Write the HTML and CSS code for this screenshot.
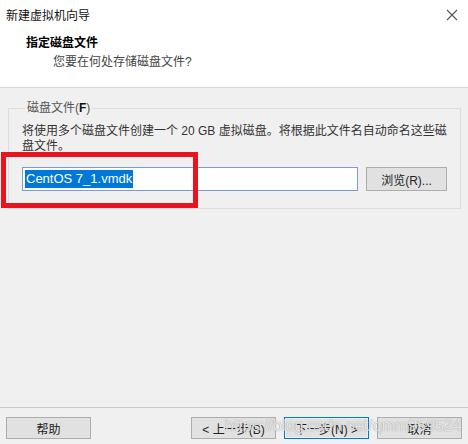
FILE: index.html
```html
<!DOCTYPE html>
<html lang="zh-CN">
<head>
    <meta charset="UTF-8">
    <title>新建虚拟机向导</title>
    <link rel="stylesheet" href="styles.css">
</head>
<body>
    <div class="wizard">
        <div class="top">
            <div class="titlebar">
                <span class="title">新建虚拟机向导</span>
                <span class="close">
                    <svg width="12" height="12" viewBox="0 0 12 12"><path d="M1 1 L11 11 M11 1 L1 11" stroke="#555" stroke-width="1.1"/></svg>
                </span>
            </div>
            <div class="page-head">
                <div class="page-title">指定磁盘文件</div>
                <div class="page-sub">您要在何处存储磁盘文件?</div>
            </div>
        </div>

        <div class="content">
            <fieldset class="group">
                <legend>磁盘文件(<b>F</b>)</legend>
                <p class="desc">将使用多个磁盘文件创建一个 20 GB 虚拟磁盘。将根据此文件名自动命名这些磁盘文件。</p>
                <div class="file-row">
                    <div class="file-input"><span class="selected">CentOS 7_1.vmdk</span></div>
                    <button class="btn browse">浏览(R)...</button>
                </div>
            </fieldset>
            <!-- red marker drawn over the screenshot -->
            <div class="marker"></div>
        </div>

        <div class="footer">
            <button class="btn">帮助</button>
            <div class="nav">
                <button class="btn">&lt; 上一步(B)</button>
                <button class="btn primary">下一步(N) &gt;</button>
                <button class="btn">取消</button>
            </div>
            <div class="watermark">https://blog.csdn.net/qmm959524</div>
        </div>
    </div>
</body>
</html>
```

FILE: styles.css
```css
* {
    box-sizing: border-box;
}
body {
    margin: 0;
    background-color: #f0f0f0;
    font-family: "Liberation Sans", "Noto Sans CJK SC", sans-serif;
    font-size: 12px;
    color: #1a1a1a;
}
.wizard {
    width: 468px;
    height: 444px;
    display: flex;
    flex-direction: column;
    overflow: hidden;
}

/* white title + header area */
.top {
    background-color: #fff;
    height: 88px;
    border-bottom: 1px solid #d6d6d6;
}
.titlebar {
    height: 29px;
    display: flex;
    align-items: center;
    justify-content: space-between;
    padding: 0 8px 0 6px;
}
.title {
    font-size: 12px;
    color: #111;
}
.close {
    display: flex;
    width: 14px;
    height: 14px;
    align-items: center;
    justify-content: center;
    margin-right: 1px;
}
.page-head {
    padding: 6px 0 0 26px;
}
.page-title {
    font-weight: bold;
    font-size: 12px;
    line-height: 17px;
    color: #000;
}
.page-sub {
    padding-left: 27px;
    line-height: 19px;
    color: #444;
    margin-top: 1px;
}

/* main area */
.content {
    position: relative;
    flex: 1;
    padding: 12px 7px 0 8px;
}
.group {
    margin: 0;
    padding: 3px 2px 13px 13px;
    border: 1px solid #dcdcdc;
    height: 109px;
}
.group legend {
    padding: 0 2px;
    margin-left: 3px;
    color: #555;
    line-height: 16px;
}
.group legend b {
    color: #111;
}
.desc {
    margin: 5px 0 0 0;
    line-height: 15px;
    color: #333;
    width: 428px;
}
.file-row {
    display: flex;
    gap: 8px;
    margin-top: 13px;
}
.file-input {
    width: 336px;
    height: 24px;
    background-color: #fff;
    border: 1px solid #7a9cd3;
    padding: 2px 2px;
    display: flex;
    align-items: center;
}
.selected {
    background-color: #0078d7;
    color: #fff;
    font-size: 13px;
    line-height: 18px;
    padding: 0 1px;
}
.btn {
    font-family: "Liberation Sans", "Noto Sans CJK SC", sans-serif;
    font-size: 12px;
    color: #222;
    background-color: #e1e1e1;
    border: 1px solid #adadad;
    width: 85px;
    height: 22px;
    padding: 0;
}
.browse {
    width: 81px;
    height: 24px;
}
.primary {
    border-color: #0078d7;
    box-shadow: inset 0 0 0 1px #e8f0f8;
}
.marker {
    position: absolute;
    left: 1px;
    top: 64px;
    width: 197px;
    height: 56px;
    border: 5px solid #e8141e;
}

/* bottom buttons */
.footer {
    position: relative;
    height: 37px;
    border-top: 1px solid #c8c8c8;
    display: flex;
    justify-content: space-between;
    align-items: flex-start;
    padding: 9px 6px 0 6px;
}
.nav {
    display: flex;
    gap: 8px;
}
.watermark {
    position: absolute;
    left: 225px;
    top: 9px;
    font-size: 16px;
    color: rgba(255, 255, 255, 0.8);
    text-shadow: 0 0 1px rgba(80, 80, 80, 0.7);
}
```
